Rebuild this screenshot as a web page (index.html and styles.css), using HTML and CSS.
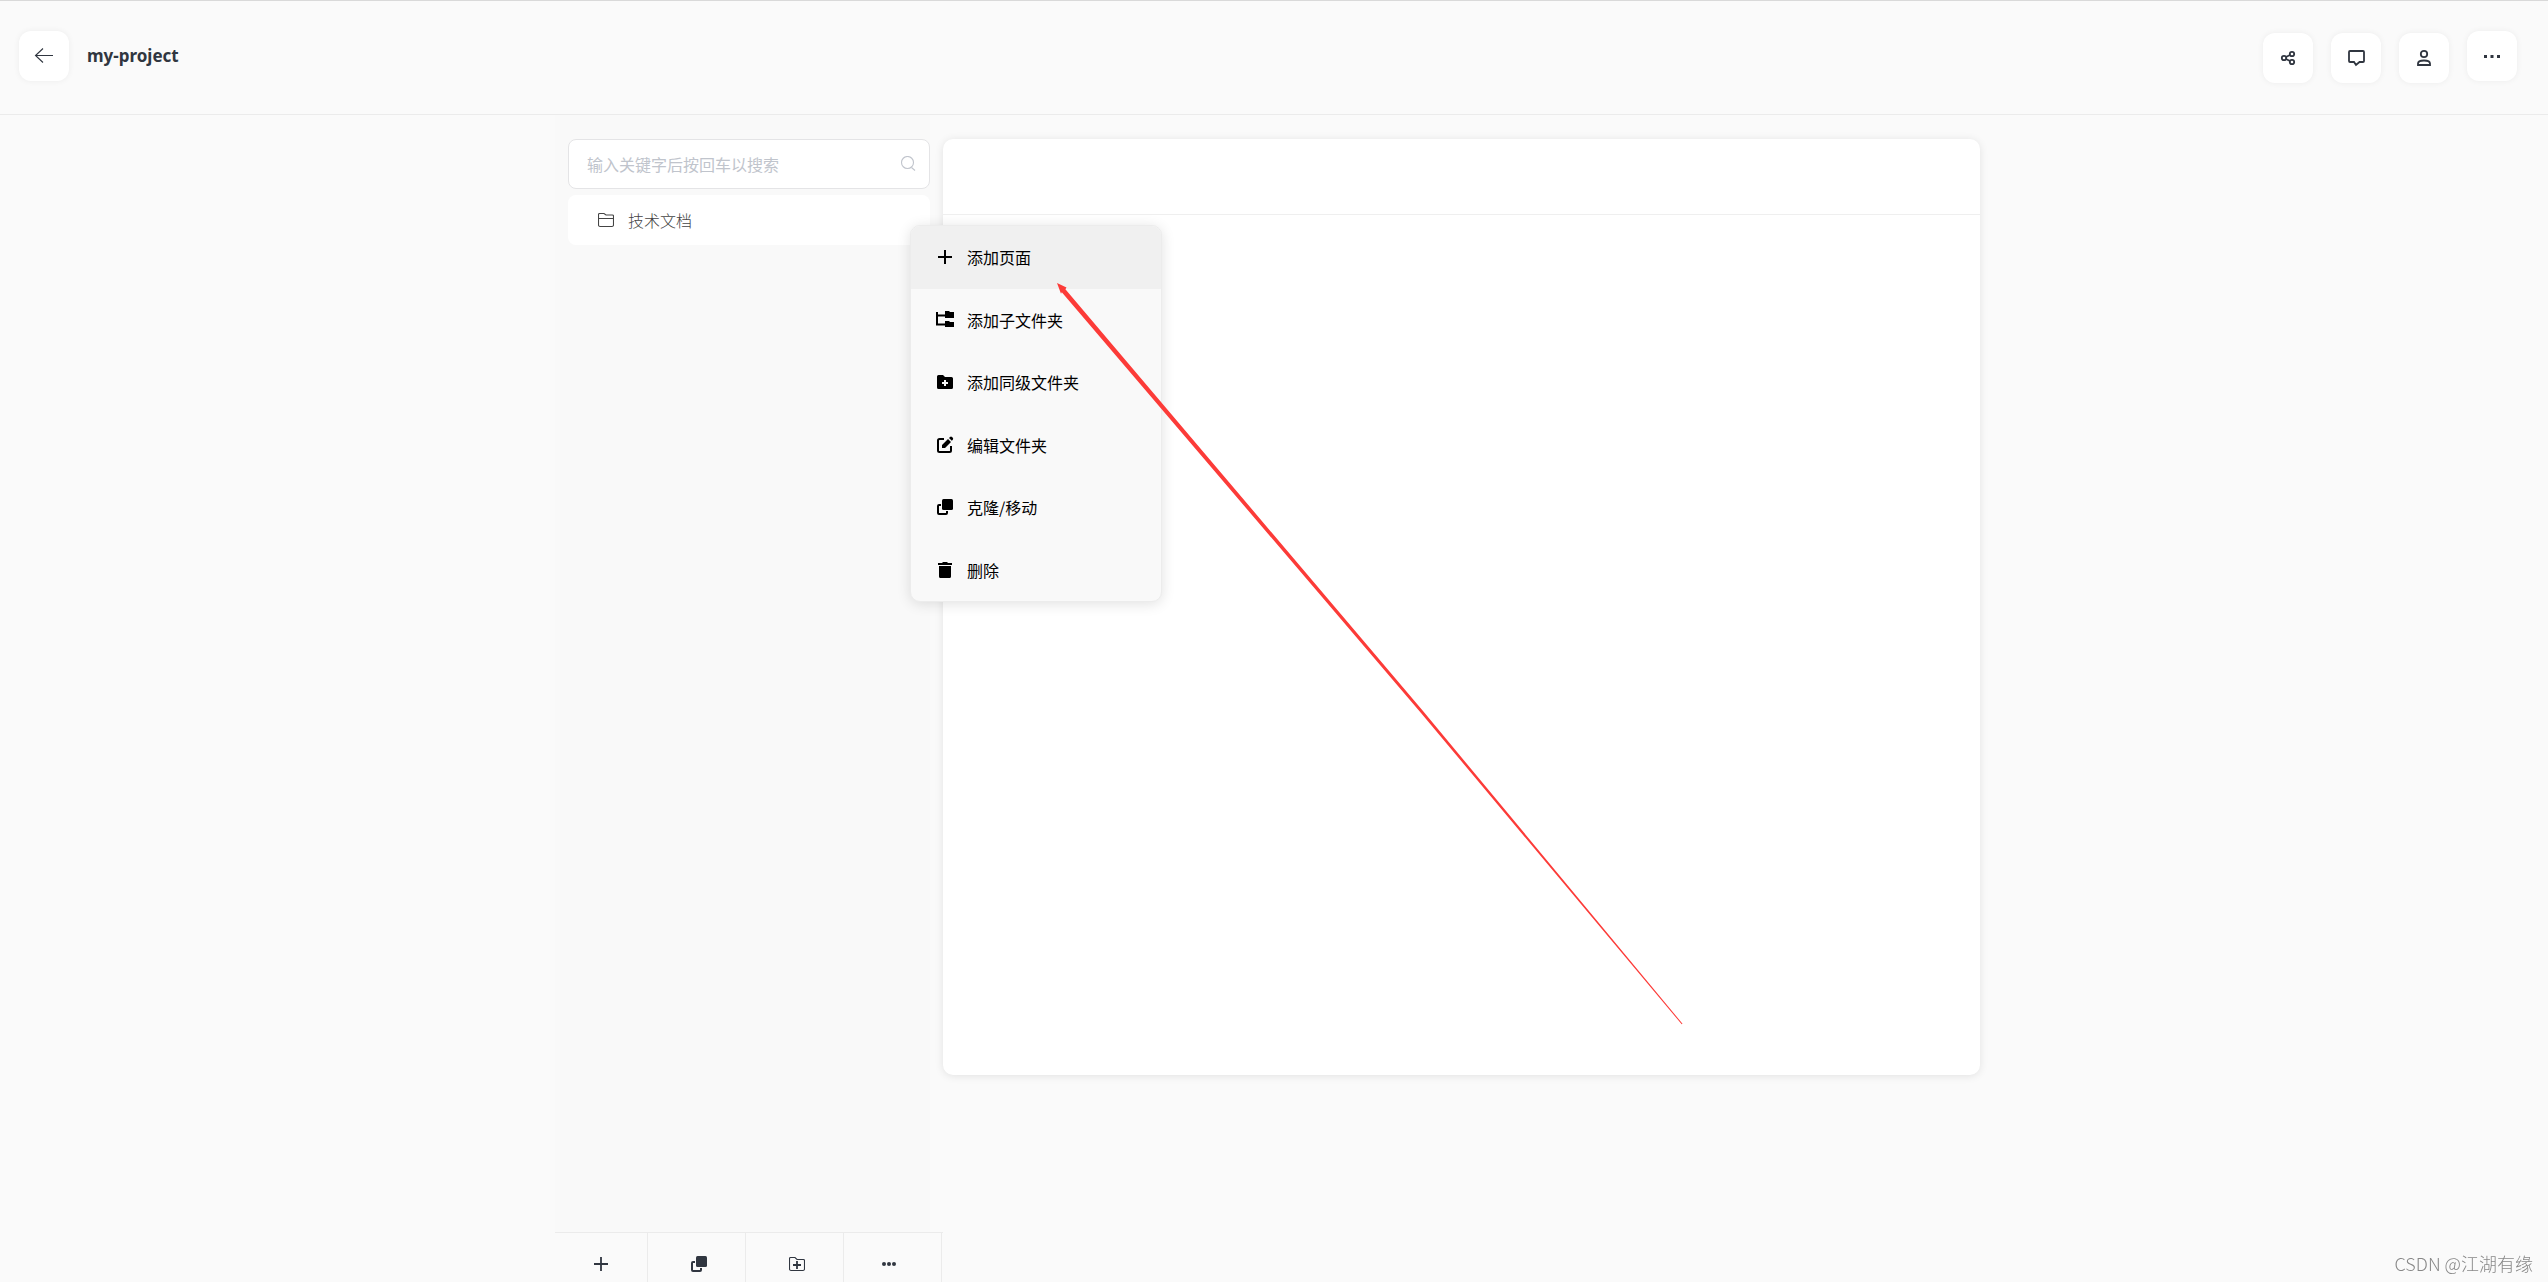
FILE: index.html
```html
<!DOCTYPE html>
<html lang="zh-CN">
<head>
<meta charset="utf-8">
<meta name="viewport" content="width=device-width, initial-scale=1">
<title>my-project</title>
<link rel="stylesheet" href="styles.css">
</head>
<body>
<header class="topbar">
  <button class="tile" type="button" aria-label="返回">
    <svg class="icon" viewBox="0 0 20 20"><path class="line thin" d="M19 9.500H2M9 2.500L1.500 9.500l7.500 7"/></svg>
  </button>
  <h1 class="title">my-project</h1>
  <nav class="actions">
    <button class="tile" type="button" aria-label="分享">
      <svg class="icon" viewBox="0 0 20 20"><g class="line"><circle cx="6" cy="10" r="2.200"/><circle cx="14" cy="6" r="2.200"/><circle cx="14" cy="14" r="2.200"/><path d="M8 9l4-2M8 11l4 2"/></g></svg>
    </button>
    <button class="tile" type="button" aria-label="评论">
      <svg class="icon" viewBox="0 0 20 20"><path class="line" d="M4 3h13q1 0 1 1v9q0 1-1 1h-3.500L10 17l-2-3H4q-1 0-1-1V4q0-1 1-1z"/></svg>
    </button>
    <button class="tile" type="button" aria-label="用户">
      <svg class="icon" viewBox="0 0 20 20"><g class="line"><circle cx="10" cy="6" r="3.200"/><path d="M4 17v-1.500Q4 12.500 10 12.500t6 3V17z"/></g></svg>
    </button>
    <button class="tile raised" type="button" aria-label="更多">
      <svg class="icon" viewBox="0 0 20 20"><path d="M2 9h3v3H2zM8.500 9h3v3h-3zM15 9h3v3h-3z"/></svg>
    </button>
  </nav>
</header>

<main class="workspace">
  <aside class="sidebar">
    <div class="tree">
      <label class="search">
        <input class="search-input" type="text" placeholder="输入关键字后按回车以搜索" aria-label="搜索">
        <svg class="icon small muted" viewBox="0 0 16 16"><circle class="line thin" cx="7.500" cy="6.500" r="6"/><path class="line thin" d="M11.500 11.500l3.500 3"/></svg>
      </label>
      <button class="folder" type="button">
        <svg class="icon small" viewBox="0 0 16 16"><path class="line thin" d="M.5 13V2.500q0-1 1-1h4.500l2 1.500h6.500q1 0 1 1V13q0 1.500-1.500 1.500H2Q.5 14.500.5 13zM.5 6.500h15"/></svg>
        <span>技术文档</span>
      </button>
    </div>
    <footer class="tools">
      <button class="tool" type="button" aria-label="添加">
        <svg class="icon small" viewBox="0 0 16 16"><path class="line" d="M8 1v14M1 8h14"/></svg>
      </button>
      <button class="tool shifted" type="button" aria-label="克隆">
        <svg class="icon small" viewBox="0 0 16 16"><rect x="5" y="0" width="11" height="11" rx="1.500"/><path class="line heavy" d="M4 6H2q-1 0-1 1v7q0 1 1 1h7q1 0 1-1v-2"/></svg>
      </button>
      <button class="tool shifted" type="button" aria-label="添加文件夹">
        <svg class="icon small" viewBox="0 0 16 16"><path class="line thin" d="M.5 13V2.500q0-1 1-1h4.500l2 2h6.500q1 0 1 1V13q0 1.500-1.500 1.500H2Q.5 14.500.5 13z"/><path class="line" d="M8 5v8M4 9h8"/></svg>
      </button>
      <button class="tool last" type="button" aria-label="更多">
        <svg class="icon small" viewBox="0 0 16 16"><circle cx="3" cy="8" r="2"/><circle cx="8" cy="8" r="2"/><circle cx="13" cy="8" r="2"/></svg>
      </button>
    </footer>
  </aside>

  <section class="document">
    <div class="document-head"></div>
  </section>

  <div class="menu" role="menu">
    <button class="menu-item active" type="button" role="menuitem">
      <svg class="icon" viewBox="0 0 20 20"><path class="line heavy" d="M10 3v14M3 10h14"/></svg>添加页面
    </button>
    <button class="menu-item" type="button" role="menuitem">
      <svg class="icon" viewBox="0 0 20 20"><path class="line heavy" d="M2 2v12.500h8M2 5.500h8"/><path d="M10 1h4l1 1h4v6h-9zM10 11h4l1 1h4v5h-9z"/></svg>添加子文件夹
    </button>
    <button class="menu-item" type="button" role="menuitem">
      <svg class="icon" viewBox="0 0 20 20"><path fill-rule="evenodd" d="M3.500 3H8l2 2h6.500q1.500 0 1.500 1.500v9q0 1.500-1.500 1.500h-13Q2 17 2 15.500v-11Q2 3 3.500 3zM9 8v2H7v2h2v2h2v-2h2v-2h-2V8z"/></svg>添加同级文件夹
    </button>
    <button class="menu-item" type="button" role="menuitem">
      <svg class="icon" viewBox="0 0 20 20"><path class="line heavy" d="M9 4H4.500Q3 4 3 5.500v10Q3 17 4.500 17h10q1.500 0 1.500-1.500V11"/><path d="M7 13V10l6-6 3 3-6 6zM14 3l1-1q1-.8 2 0l.8.8q.8 1 0 2l-1 1z"/></svg>编辑文件夹
    </button>
    <button class="menu-item" type="button" role="menuitem">
      <svg class="icon" viewBox="0 0 20 20"><rect x="7" y="2" width="11" height="11" rx="1.500"/><path class="line heavy" d="M6 8H4Q3 8 3 9v7q0 1 1 1h7q1 0 1-1v-2"/></svg>克隆/移动
    </button>
    <button class="menu-item" type="button" role="menuitem">
      <svg class="icon" viewBox="0 0 20 20"><path d="M3 3h4l1-1h4l1 1h4v2H3zM4 6h12v10.500q0 1.500-1.500 1.500h-9Q4 18 4 16.500z"/></svg>删除
    </button>
  </div>

  <svg class="pointer" viewBox="0 0 628 744" aria-hidden="true"><path d="M0 0L9.500 4.500 8.400 6.200 366 428 625.500 740.700 624.700 741.300 364 430 4.800 9.200 4 10.800z"/></svg>
</main>
<div class="watermark">CSDN @江湖有缘</div>
</body>
</html>
```
FILE: styles.css
```css
* {
  box-sizing: border-box;
}

body {
  margin: 0;
  height: 100vh;
  display: flex;
  flex-direction: column;
  overflow: hidden;
  background: #fafafa;
  color: #303640;
  font: 300 16px/24px "Noto Sans CJK SC", sans-serif;
}

button,
input {
  margin: 0;
  padding: 0;
  border: 0;
  background: none;
  color: inherit;
  font: inherit;
}

.icon {
  flex: none;
  width: 20px;
  height: 20px;
  fill: currentColor;
}

.icon.small {
  width: 16px;
  height: 16px;
}

.line {
  fill: none;
  stroke: currentColor;
  stroke-width: 1.8;
}

.thin {
  stroke-width: 1.1;
}

.heavy {
  stroke-width: 2;
}

.muted {
  color: #c0c4cc;
}

.topbar {
  flex: none;
  height: 115px;
  display: flex;
  align-items: flex-start;
  padding: 30px 31px 0 19px;
  border-top: 1px solid #d9d9d9;
  border-bottom: 1px solid #ebebeb;
}

.title {
  margin: 13px 0 0 18px;
  font: 700 17px/24px "Noto Sans", sans-serif;
}

.actions {
  margin-left: auto;
  display: flex;
  gap: 18px;
  padding-top: 2px;
}

.tile {
  width: 50px;
  height: 50px;
  display: flex;
  align-items: center;
  justify-content: center;
  border-radius: 12px;
  background: #fff;
  box-shadow: 0 0 6px rgba(0, 0, 0, 0.06);
}

.raised {
  margin-top: -2px;
}

.workspace {
  position: relative;
  flex: 1;
  min-height: 0;
  width: 100%;
  max-width: 1438px;
  margin: 0 auto;
  padding-right: 13px;
  display: flex;
  align-items: flex-start;
}

.sidebar {
  flex: none;
  width: 388px;
  height: 100%;
  display: flex;
  flex-direction: column;
}

.tree {
  flex: 1;
  display: flex;
  flex-direction: column;
  gap: 6px;
  margin-right: 13px;
  padding: 24px 0 0 13px;
  background: #f9f9f9;
}

.search {
  height: 50px;
  display: flex;
  align-items: center;
  padding: 0 13px 0 18px;
  border: 1px solid #e4e4e6;
  border-radius: 8px;
  background: #fff;
}

.search-input {
  flex: 1;
  min-width: 0;
  outline: 0;
  font-weight: 400;
}

.search-input::placeholder {
  color: #c0c4cc;
  opacity: 1;
}

.folder {
  height: 50px;
  display: flex;
  align-items: center;
  gap: 14px;
  padding-left: 30px;
  border-radius: 8px;
  background: #fff;
  color: #444;
}

.tools {
  flex: none;
  height: 50px;
  display: grid;
  grid-template-columns: 93px 98px 98px 98px;
  border-top: 1px solid #ebebeb;
}

.tool {
  display: flex;
  justify-content: center;
  padding-top: 23px;
  border-right: 1px solid #ebebeb;
}

.shifted {
  padding-left: 5px;
}

.last {
  padding-right: 8px;
}

.document {
  flex: 1;
  height: 936px;
  border-radius: 10px;
  background: #fff;
  box-shadow: 0 1px 8px rgba(0, 0, 0, 0.1);
  margin-top: 24px;
}

.document-head {
  height: 76px;
  border-bottom: 1px solid #efefef;
}

.menu {
  position: absolute;
  left: 355px;
  top: 110px;
  width: 252px;
  height: 377px;
  display: grid;
  grid-auto-rows: 1fr;
  overflow: hidden;
  border: 1px solid #ececec;
  border-radius: 10px;
  background: #f9f9f9;
  color: #000;
  font-weight: 400;
  box-shadow: 0 2px 14px rgba(0, 0, 0, 0.12);
}

.menu-item {
  display: flex;
  align-items: center;
  gap: 12px;
  padding-left: 24px;
  text-align: left;
}

.active {
  background: #f0f0f0;
}

.pointer {
  position: absolute;
  left: 502px;
  top: 168px;
  width: 628px;
  height: 744px;
  fill: #fc3b38;
  pointer-events: none;
}

.watermark {
  position: fixed;
  right: 15px;
  bottom: 7px;
  color: #888;
  font-size: 18px;
}
```
